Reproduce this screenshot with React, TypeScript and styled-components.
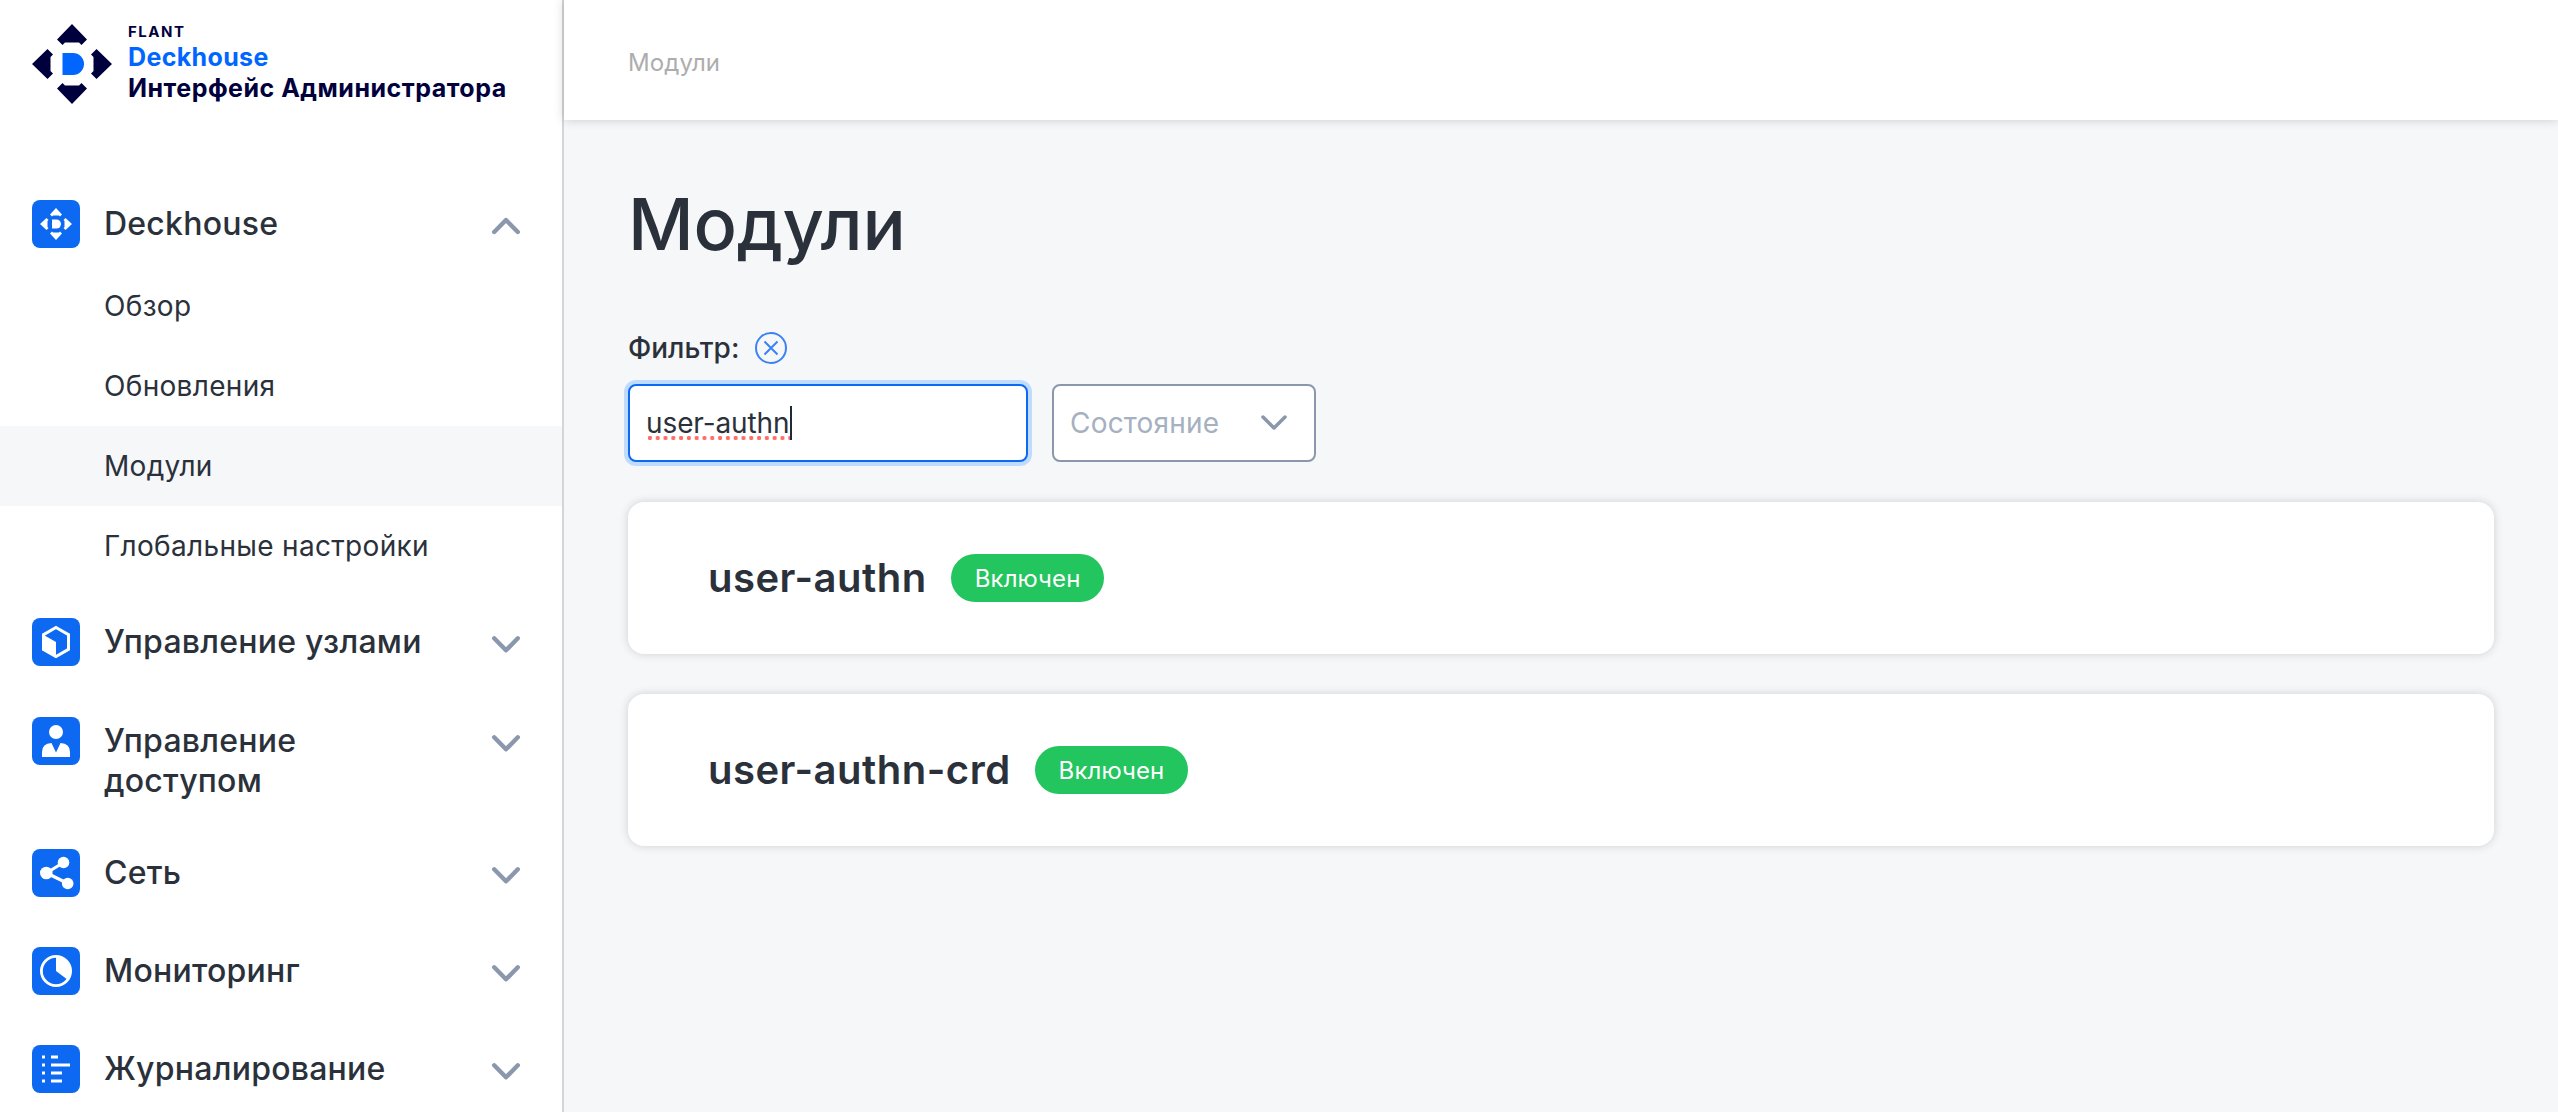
import React from "react";
import styled, { createGlobalStyle } from "styled-components";

const GlobalStyle = createGlobalStyle`
  *, *::before, *::after { box-sizing: border-box; }
  body { margin: 0; background: #f5f7f9; font-family: Inter, "Noto Sans", sans-serif; color: #2b313b; }
  h1, h2, p { margin: 0; }
  button { font: inherit; color: inherit; background: none; border: 0; padding: 0; text-align: left; }
`;

const Page = styled.div`
  display: flex;
  height: 1112px;
  overflow: hidden;
`;

const Sidebar = styled.aside`
  flex: 0 0 564px;
  background: #fff;
  border-right: 2px solid #d3d5d8;
  overflow: hidden;
`;

const Brand = styled.div`
  display: flex;
  gap: 16px;
  padding: 24px 0 0 32px;
  height: 176px;
`;

const BrandText = styled.div`
  display: flex;
  flex-direction: column;
  font-weight: 700;
  color: #00003c;
  white-space: nowrap;
`;

const BrandCompany = styled.span`
  margin-bottom: 2px;
  font-size: 15px;
  line-height: 16px;
  letter-spacing: 1.5px;
`;

const BrandLine = styled.span<{ $accent?: boolean; $spacing: string }>`
  font-size: 25px;
  line-height: 31px;
  letter-spacing: ${(p) => p.$spacing};
  color: ${(p) => (p.$accent ? "#0066ff" : "#00003c")};
`;

const Nav = styled.nav`
  display: flex;
  flex-direction: column;
`;

const SubMenu = styled.div`
  display: flex;
  flex-direction: column;
  margin-bottom: 8px;
`;

const Group = styled.button<{ $height: number }>`
  display: flex;
  align-items: flex-start;
  height: ${(p) => p.$height}px;
  padding: 24px 40px 0 32px;
`;

const GroupBadge = styled.svg`
  flex: none;
`;

const GroupLabel = styled.span`
  flex: 0 0 340px;
  margin: 4px auto 0 24px;
  font-size: 32px;
  font-weight: 500;
  line-height: 40px;
  letter-spacing: 0.24px;
`;

const GroupChevron = styled.svg`
  flex: none;
  margin-top: 14px;
`;

const SubItem = styled.a<{ $active?: boolean }>`
  display: flex;
  align-items: center;
  height: 80px;
  padding-left: 104px;
  font-size: 28px;
  letter-spacing: 0.32px;
  background: ${(p) => (p.$active ? "#f5f7f9" : "transparent")};
`;

const Main = styled.main`
  flex: 1;
  min-width: 0;
  display: flex;
  flex-direction: column;
`;

const Header = styled.header`
  display: flex;
  align-items: center;
  height: 120px;
  padding: 4px 64px 0;
  background: #fff;
  color: #adadad;
  font-size: 24px;
  letter-spacing: 0.1px;
  box-shadow: 0 0 10px rgba(0, 0, 0, 0.18);
`;

const Content = styled.section`
  display: flex;
  flex-direction: column;
  padding: 64px;
`;

const Title = styled.h1`
  font-size: 72px;
  line-height: 80px;
  font-weight: 500;
  letter-spacing: -0.25px;
`;

const FilterHead = styled.div`
  display: flex;
  align-items: center;
  gap: 16px;
  height: 40px;
  margin-top: 64px;
  font-size: 28px;
  font-weight: 500;
  letter-spacing: 0;
`;

const Filters = styled.div`
  display: flex;
  gap: 24px;
  margin-top: 16px;
`;

const TextField = styled.div`
  display: flex;
  align-items: center;
  width: 400px;
  height: 78px;
  padding-left: 16px;
  font-size: 28px;
  letter-spacing: -0.1px;
  background: #fff;
  border: 2px solid #0d69f2;
  border-radius: 8px;
  box-shadow: 0 0 0 4px #bfdbfe;
`;

const Misspelled = styled.span`
  line-height: 34px;
  background: radial-gradient(circle, #ff6f68 1.9px, transparent 2.4px) 0 100% / 7.8px 4px repeat-x;
`;

const Caret = styled.span`
  width: 2px;
  height: 34px;
  background: #1f2937;
`;

const Select = styled.div`
  display: flex;
  align-items: center;
  justify-content: space-between;
  width: 264px;
  height: 78px;
  padding: 0 27px 0 16px;
  font-size: 28px;
  letter-spacing: 0.2px;
  color: #a5b0c0;
  background: #fff;
  border: 2px solid #8a97ac;
  border-radius: 8px;
`;

const ModuleList = styled.div`
  display: flex;
  flex-direction: column;
  gap: 40px;
  margin-top: 40px;
`;

const ModuleCard = styled.article`
  display: flex;
  align-items: center;
  gap: 24px;
  height: 152px;
  padding-left: 80px;
  background: #fff;
  border-radius: 16px;
  box-shadow: 0 0 10px rgba(0, 0, 0, 0.16);
`;

const ModuleName = styled.h2`
  font-size: 40px;
  line-height: 48px;
  font-weight: 600;
  letter-spacing: 0.5px;
`;

const Badge = styled.span`
  display: flex;
  align-items: center;
  height: 48px;
  padding: 0 24px;
  font-size: 24px;
  letter-spacing: 0.1px;
  color: #fff;
  background: #22c55e;
  border-radius: 24px;
`;

const BrandMark = () => (
  <svg width="80" height="80" viewBox="0 0 80 80">
    <g fill="#00003c">
      {[0, 90, 180, 270].map((a) => (
        <path key={a} transform={`rotate(${a} 40 40)`} d="M40 0 55 15.5 49.5 21 47 18.5H33L30.5 21 25 15.5Z" />
      ))}
    </g>
    <path fill="#0066ff" d="M30.500 29H41a11 11 0 0 1 0 22H30.500Z" />
  </svg>
);

const glyphs: Record<string, React.ReactNode> = {
  deckhouse: (
    <>
      {[0, 90, 180, 270].map((a) => (
        <path key={a} transform={`rotate(${a} 24 24)`} d="M24 8 30 14.500 28 16.500 27 15.500H21L20 16.500 18 14.500Z" />
      ))}
      <path d="M20 19.500h4.500a4.500 4.500 0 0 1 0 9H20Z" />
    </>
  ),
  nodes: (
    <>
      <path d="M24 9.500 36.500 16.700V31.300L24 38.500 11.500 31.300V16.700Z" fill="none" stroke="#fff" strokeWidth="3" />
      <path d="M10 16 24 24V40L10 32Z" />
    </>
  ),
  access: (
    <>
      <circle cx="24" cy="15" r="7" />
      <path d="M10 40V35q0-8.500 9.500-9L24 35.500 28.500 26q9.500.500 9.500 9v5Z" />
    </>
  ),
  network: (
    <>
      <path d="M31.500 13.500 14.500 24 36 34.500" fill="none" stroke="#fff" strokeWidth="3.200" />
      <circle cx="14.300" cy="24" r="6.300" />
      <circle cx="31.500" cy="13.500" r="5.800" />
      <circle cx="35.700" cy="34.500" r="5.800" />
    </>
  ),
  monitoring: (
    <>
      <circle cx="24" cy="24" r="14.600" fill="none" stroke="#fff" strokeWidth="2.800" />
      <path d="M24 24V9A15 15 0 0 1 36 33Z" />
    </>
  ),
  logging: (
    <path d="M10 10.500h3v3h-3zM19 10.500h7v3h-7zM10 18.500h3v3h-3zM19 18.500h19v3H19zM10 26.500h3v3h-3zM19 26.500h11v3H19zM10 34.500h3v3h-3zM19 34.500h11v3H19z" />
  ),
};

const GroupIcon = ({ name }: { name: string }) => (
  <GroupBadge width="48" height="48" viewBox="0 0 48 48" fill="#fff">
    <rect width="48" height="48" rx="8" fill="#0d69f2" />
    {glyphs[name]}
  </GroupBadge>
);

const Chevron = ({ up }: { up?: boolean }) => (
  <GroupChevron width="32" height="24" viewBox="0 0 32 24" fill="none" stroke="#8a97ac" strokeWidth="4.400" strokeLinecap="round" strokeLinejoin="round">
    <path d={up ? "M4.200 18 16 6 27.800 18" : "M4.200 6.300 16 18.300 27.800 6.300"} />
  </GroupChevron>
);

const sections = [
  { icon: "nodes", label: "Управление узлами", height: 99 },
  { icon: "access", label: "Управление доступом", height: 132 },
  { icon: "network", label: "Сеть", height: 98 },
  { icon: "monitoring", label: "Мониторинг", height: 98 },
  { icon: "logging", label: "Журналирование", height: 98 },
];

const pages = ["Обзор", "Обновления", "Модули", "Глобальные настройки"];
const modules = ["user-authn", "user-authn-crd"];

export default function App() {
  return (
    <>
      <GlobalStyle />
      <Page>
        <Sidebar>
          <Brand>
            <BrandMark />
            <BrandText>
              <BrandCompany>FLANT</BrandCompany>
              <BrandLine $accent $spacing="0.35px">Deckhouse</BrandLine>
              <BrandLine $spacing="0.5px">Интерфейс Администратора</BrandLine>
            </BrandText>
          </Brand>
          <Nav>
            <Group $height={90}>
              <GroupIcon name="deckhouse" />
              <GroupLabel>Deckhouse</GroupLabel>
              <Chevron up />
            </Group>
            <SubMenu>
              {pages.map((page) => (
                <SubItem key={page} $active={page === "Модули"}>{page}</SubItem>
              ))}
            </SubMenu>
            {sections.map((s) => (
              <Group key={s.icon} $height={s.height}>
                <GroupIcon name={s.icon} />
                <GroupLabel>{s.label}</GroupLabel>
                <Chevron />
              </Group>
            ))}
          </Nav>
        </Sidebar>
        <Main>
          <Header>Модули</Header>
          <Content>
            <Title>Модули</Title>
            <FilterHead>
              Фильтр:
              <svg width="32" height="32" viewBox="0 0 32 32" fill="none" stroke="#3b82f6" strokeWidth="2">
                <circle cx="16" cy="16" r="15" />
                <path d="M9.500 9.500l13 13M22.500 9.500l-13 13" />
              </svg>
            </FilterHead>
            <Filters>
              <TextField>
                <Misspelled>user-authn</Misspelled>
                <Caret />
              </TextField>
              <Select>
                Состояние
                <svg width="26" height="16" viewBox="0 0 26 16" fill="none" stroke="#8a97ac" strokeWidth="3.500" strokeLinecap="round" strokeLinejoin="round">
                  <path d="M2 2 13 13 24 2" />
                </svg>
              </Select>
            </Filters>
            <ModuleList>
              {modules.map((name) => (
                <ModuleCard key={name}>
                  <ModuleName>{name}</ModuleName>
                  <Badge>Включен</Badge>
                </ModuleCard>
              ))}
            </ModuleList>
          </Content>
        </Main>
      </Page>
    </>
  );
}
